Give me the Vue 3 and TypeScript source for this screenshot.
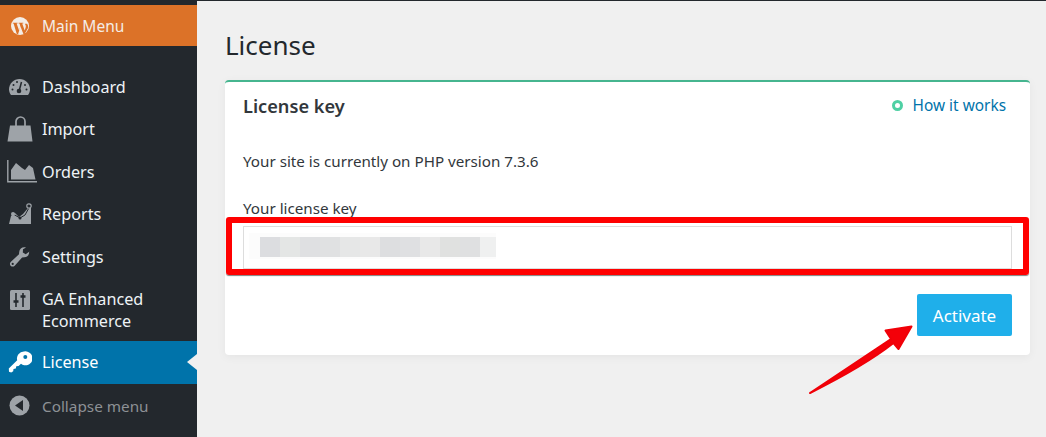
<template>
  <div class="page">
    <aside class="sidebar">
      <div class="main-menu">
        <svg class="ico" width="20" height="20" viewBox="0 0 20 20">
          <circle cx="10" cy="10" r="9" fill="#f4ede6" />
          <path d="M2.800 6.700h4.800v.7l-1 .2 2.500 7 1.300-4-.9-3-.9-.2v-.7h4.700v.7l-1.100.2 2.500 7 1-3.400c.4-1.500-.2-2.700-.9-3.500h2.300c1 1.300 1.200 2.900.9 4.300L14.700 18h-1.300l-2.900-7.400-2.400 7.400H6.800L3.600 7.500l-.8-.1z" fill="#dc7228" />
        </svg>
        <span>Main Menu</span>
      </div>
      <nav class="nav">
        <a
          v-for="item in menu"
          :key="item.label"
          class="item"
          :class="{ active: item.active, multi: item.label.length > 20 }"
        >
          <span class="ico-slot">
            <svg v-if="item.icon === 'gauge'" width="22" height="18" viewBox="0 0 22 18">
              <path d="M2 17C.7 15.500 0 13.500 0 11.300 0 5.500 4.800 1 10.500 1S21 5.500 21 11.300c0 2.200-.7 4.200-2 5.700z" fill="#9ea3a8" />
              <path d="M12.500 4l-2 7.500" stroke="#23282d" stroke-width="1.500" />
              <circle cx="10" cy="13" r="2.300" fill="#23282d" />
              <circle cx="4.500" cy="7" r="1" fill="#23282d" /><circle cx="8" cy="4" r="1" fill="#23282d" /><circle cx="16" cy="7" r="1" fill="#23282d" /><circle cx="3.500" cy="11.500" r="1" fill="#23282d" /><circle cx="17.500" cy="11.500" r="1" fill="#23282d" />
            </svg>
            <svg v-else-if="item.icon === 'bag'" width="26" height="26" viewBox="0 0 26 26">
              <path d="M3 9.500h20.500l2 16H.500z" fill="#9ea3a8" />
              <path d="M9 13V5.500a4.500 4.500 0 0 1 9 0V13" fill="none" stroke="#9ea3a8" stroke-width="1.700" />
            </svg>
            <svg v-else-if="item.icon === 'area'" class="area" width="30" height="23" viewBox="0 0 30 23">
              <path d="M.800 0v21.800H30" fill="none" stroke="#9ea3a8" stroke-width="1.400" />
              <path d="M4 19.500V10l5-7 6 5 3 2 4-5 4 3 2.500 11.500z" fill="#9ea3a8" />
            </svg>
            <svg v-else-if="item.icon === 'line'" width="24" height="22" viewBox="0 0 24 22">
              <path d="M1 21l2-8 4-3 4 4 4-3 5-6 3-1v17z" fill="#9ea3a8" />
              <path d="M5 11l7 4 5-3 5-9" fill="none" stroke="#23282d" stroke-width="1" />
              <circle cx="5" cy="11" r="2" fill="#9ea3a8" /><circle cx="12" cy="15" r="1.500" fill="#23282d" />
              <circle cx="21" cy="3" r="2.200" fill="#23282d" stroke="#9ea3a8" stroke-width="1.200" />
            </svg>
            <svg v-else-if="item.icon === 'wrench'" width="22" height="22" viewBox="0 0 22 22">
              <path d="M20.500 5.500l-3.800 2.700-2.900-1.600.2-3.300L17 1.500c-3-1-6.500.5-6.800 4.500l-.2 2.300-8.300 7.700c-1.200 1.200-.9 3 .1 3.900 1.200 1 2.900.9 3.900-.2l7.400-8.300 2.200-.1c3.700-.3 5.300-3.100 4.700-5.800z" fill="#9ea3a8" />
              <circle cx="3.700" cy="17.900" r="1.100" fill="#23282d" />
            </svg>
            <svg v-else-if="item.icon === 'sliders'" width="20" height="20" viewBox="0 0 20 20">
              <rect width="20" height="20" rx="1.500" fill="#9ea3a8" />
              <path d="M6 3v14M13 3v14" stroke="#23282d" stroke-width="1.600" />
              <path d="M3.500 11.500h5M10.500 6.500h5" stroke="#23282d" stroke-width="2.400" />
            </svg>
            <svg v-else-if="item.icon === 'key'" width="24" height="22" viewBox="0 0 24 22">
              <path d="M16 .500a7 7 0 0 0-6.800 8.800L.800 17.500 1 20.800l2.200.6 2-1.200.3-2.300 2.300-.3.500-2.300 2.300-.3 2.400-2.300A7 7 0 1 0 16 .500z" fill="#fff" />
              <circle cx="17.300" cy="6" r="2" fill="#0073aa" />
            </svg>
          </span>
          <span class="label">{{ item.label }}</span>
        </a>
        <a class="collapse">
          <span class="ico-slot">
            <svg width="21" height="21" viewBox="0 0 21 21">
              <circle cx="10.500" cy="10.500" r="10" fill="#9ea3a8" />
              <path d="M14 5v11l-8-5.500z" fill="#23282d" />
            </svg>
          </span>
          <span>Collapse menu</span>
        </a>
      </nav>
    </aside>

    <main class="content">
      <h1 class="title">License</h1>
      <section class="card">
        <header class="card-head">
          <h2>License key</h2>
          <a class="how"><i class="dot"></i>How it works</a>
        </header>
        <p class="php">Your site is currently on PHP version 7.3.6</p>
        <label class="key-label">Your license key</label>
        <div class="input">
          <div class="halo">
            <span v-for="(c, i) in blurCells" :key="i" class="cell" :style="{ background: c }"></span>
          </div>
        </div>
        <div class="actions">
          <button class="activate">Activate</button>
        </div>
        <div class="red-box"></div>
        <svg class="arrow" width="110" height="75" viewBox="0 0 110 75">
          <path d="M4 71L85 17 79.500 8.500 105.500 4.500 92.500 27 87.500 21C62 41 32 57 4 71z" fill="#f40009" stroke="#f00008" stroke-linejoin="round" stroke-width="2" />
        </svg>
      </section>
    </main>
  </div>
</template>

<script setup lang="ts">
interface MenuItem {
  label: string
  icon: string
  active?: boolean
}

const menu: MenuItem[] = [
  { label: 'Dashboard', icon: 'gauge' },
  { label: 'Import', icon: 'bag' },
  { label: 'Orders', icon: 'area' },
  { label: 'Reports', icon: 'line' },
  { label: 'Settings', icon: 'wrench' },
  { label: 'GA Enhanced Ecommerce', icon: 'sliders' },
  { label: 'License', icon: 'key', active: true }
]

// blurred key
const blurCells = [
  '#dcdde0', '#e4e6e5', '#dfe0e2', '#e0e1e2', '#e6e7e7', '#e8e8e8',
  '#dddee0', '#dfe0e2', '#e8e8e8', '#e0e1e0', '#dfe0e1', '#eff0f0'
]
</script>

<style>
html, body {
  margin: 0;
  background: #f0f0f0;
}
</style>

<style scoped>
.page {
  display: flex;
  width: 1046px;
  height: 437px;
  overflow: hidden;
  font-family: 'Noto Sans', 'Open Sans', sans-serif;
  background: #f0f0f0;
  border-top: 1px solid #23282d;
  box-sizing: border-box;
}

.sidebar {
  width: 197px;
  flex: none;
  background: #23282d;
  padding-top: 4px;
}

.main-menu {
  height: 41px;
  display: flex;
  align-items: center;
  gap: 12px;
  padding-left: 10px;
  background: #dc7228;
  color: #f4ede6;
  font-size: 15.500px;
}

.nav {
  display: flex;
  flex-direction: column;
  padding-top: 19.500px;
}

.item {
  position: relative;
  display: flex;
  align-items: center;
  min-height: 42.500px;
  color: #eef3f6;
  font-size: 16.200px;
  line-height: 22px;
}

.item.multi {
  padding: 9.500px 0;
  align-items: flex-start;
}

.item.multi .ico-slot {
  margin-top: 2px;
}

.ico-slot {
  width: 42px;
  flex: none;
  display: flex;
  justify-content: center;
  padding-right: 3px;
  box-sizing: border-box;
}

.area {
  margin-left: 4px;
}

.label {
  width: 120px;
}

.item.active {
  background: #0073aa;
  color: #fff;
}

.item.active::after {
  content: '';
  position: absolute;
  right: 0;
  top: 13px;
  border: 8.500px solid transparent;
  border-left: 0;
  border-right: 10px solid #f0f0f0;
}

.collapse {
  display: flex;
  align-items: center;
  height: 44px;
  color: #8d9195;
  font-size: 15.300px;
}

.content {
  flex: 1;
  padding: 0 16px 0 28px;
}

.title {
  margin: 24px 0 0;
  height: 55px;
  font-size: 26px;
  line-height: 40px;
  font-weight: 400;
  color: #23282d;
}

.card {
  position: relative;
  height: 275px;
  box-sizing: border-box;
  padding: 0 18px;
  background: #fff;
  border-top: 2px solid #46b58f;
  border-radius: 4px;
  box-shadow: 0 2px 10px rgba(0, 0, 0, 0.05);
  color: #32373c;
}

.card-head {
  display: flex;
  align-items: center;
  justify-content: space-between;
  height: 48px;
  padding-right: 6px;
}

.card-head h2 {
  margin: 0;
  font-size: 18.200px;
  font-weight: 600;
}

.how {
  display: flex;
  align-items: center;
  padding-bottom: 1px;
  color: #0073aa;
  font-size: 15.400px;
}

.dot {
  width: 5px;
  height: 5px;
  margin-right: 10px;
  border: 3px solid #4fd0a4;
  border-radius: 50%;
}

.php {
  margin: 20px 0 0;
  height: 47px;
  font-size: 15.200px;
  line-height: 22px;
}

.key-label {
  display: block;
  height: 29px;
  font-size: 15.200px;
  line-height: 22px;
}

.input {
  height: 43px;
  box-sizing: border-box;
  padding: 6px 5px;
  background: #fff;
  border: 1px solid #ddd;
}

.halo {
  display: flex;
  align-items: center;
  width: 247px;
  height: 26px;
  padding: 2px 0 0 11px;
  box-sizing: border-box;
  background: #fcfcfc;
}

.cell {
  width: 20px;
  height: 20px;
}

.cell:last-child {
  width: 16px;
}

.actions {
  display: flex;
  justify-content: flex-end;
  margin-top: 25px;
}

.activate {
  width: 95px;
  height: 42px;
  border: 0;
  border-radius: 2px;
  background: #1fafea;
  color: #fff;
  font-family: inherit;
  font-size: 17px;
}

.red-box {
  position: absolute;
  left: 1px;
  top: 135px;
  width: 803px;
  height: 58px;
  box-sizing: border-box;
  border: 6px solid #ff0000;
  border-radius: 3px;
  box-shadow: 0 1px 1px rgba(0, 0, 0, 0.5);
}

.arrow {
  position: absolute;
  left: 581px;
  top: 240px;
}
</style>
